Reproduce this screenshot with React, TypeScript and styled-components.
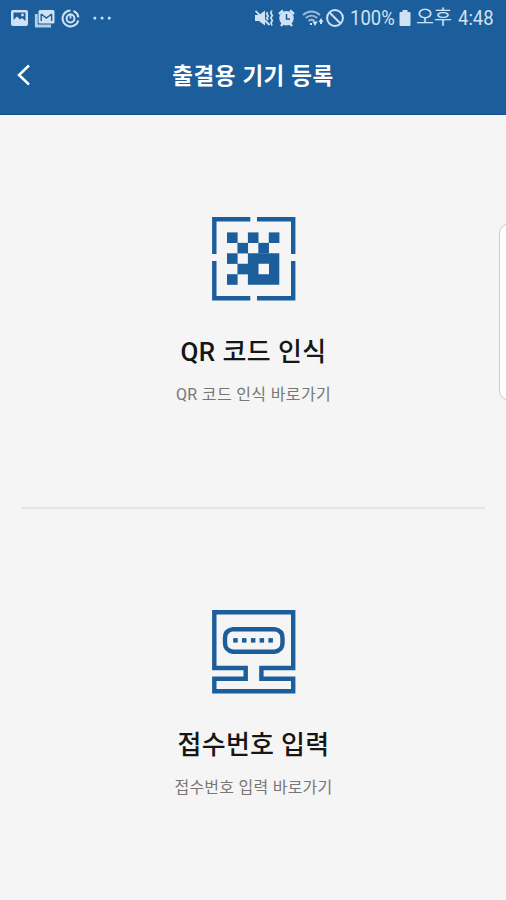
import React from "react";
import styled, { createGlobalStyle } from "styled-components";

const GlobalStyle = createGlobalStyle`
  *, *::before, *::after { box-sizing: border-box; }
  html, body { margin: 0; padding: 0; background: #f5f5f5; }
  body { font-family: Roboto, "Noto Sans CJK KR", sans-serif; overflow: hidden; }
`;

const brand = "#1b5e9b";
const statusTint = "#cfe2f4";

const Screen = styled.div`
  position: relative;
  display: flex;
  flex-direction: column;
  width: 506px;
  height: 900px;
  background: #f5f5f5;
  overflow: hidden;
`;

const Header = styled.header`
  flex: none;
  height: 115px;
  background: ${brand};
  border-bottom: 1px solid #175088;
`;

const StatusBar = styled.div`
  display: flex;
  justify-content: space-between;
  height: 36px;
  padding: 0 10px;
  color: ${statusTint};
`;

const StatusGroup = styled.div`
  display: flex;
  align-items: center;
`;

const StatusIcon = styled.svg<{ $gap?: number }>`
  display: block;
  flex: none;
  margin-right: ${({ $gap = 0 }) => $gap}px;
`;

const StatusText = styled.span<{ $width: number; $gap?: number }>`
  display: block;
  width: ${({ $width }) => $width}px;
  margin-right: ${({ $gap = 0 }) => $gap}px;
  font-size: 19.5px;
  line-height: 38px;
  white-space: nowrap;
`;

const Condensed = styled.span`
  display: inline-block;
  font-size: 21px;
  transform: scaleX(0.88);
  transform-origin: left center;
`;

const TitleBar = styled.div`
  display: grid;
  grid-template-columns: 60px 1fr 60px;
  align-items: center;
  height: 78px;
`;

const BackButton = styled.button`
  display: flex;
  align-items: center;
  height: 48px;
  padding: 0 0 0 16px;
  border: 0;
  background: none;
  color: #fff;
`;

const Title = styled.h1`
  margin: 2px 0 0;
  color: #fff;
  font-size: 22.5px;
  font-weight: 700;
  line-height: 32px;
  letter-spacing: 0.45px;
  word-spacing: 0.6px;
  text-align: center;
  white-space: nowrap;
`;

const Options = styled.main`
  display: flex;
  flex-direction: column;
`;

const Option = styled.section`
  display: flex;
  flex-direction: column;
  align-items: center;
  height: 393px;
  padding: 102px 0 0 1px;
  color: ${brand};
`;

const OptionIcon = styled.svg`
  display: block;
  width: 84px;
  height: 84px;
`;

const OptionTitle = styled.h2<{ $spacing: number }>`
  margin: 32px 0 0;
  color: #161616;
  font-size: 26px;
  font-weight: 500;
  line-height: 38px;
  letter-spacing: ${({ $spacing }) => $spacing}px;
  white-space: nowrap;
`;

const OptionHint = styled.p<{ $spacing: number }>`
  margin: 12px 0 0;
  color: #777;
  font-size: 16px;
  font-weight: 400;
  line-height: 24px;
  letter-spacing: ${({ $spacing }) => $spacing}px;
  white-space: nowrap;
`;

const Divider = styled.hr`
  width: 464px;
  height: 2px;
  margin: -1px auto;
  border: 0;
  background: #e6e6e6;
`;

const EdgeHandle = styled.div`
  position: absolute;
  top: 224px;
  right: -12px;
  width: 19px;
  height: 176px;
  border: 1px solid #c9c9c9;
  border-radius: 9px;
  background: #fff;
`;

const qrCells = [
  [0, 0], [2, 0], [4, 0],
  [1, 1], [3, 1],
  [0, 2],
  [1, 3],
  [0, 4],
];

function QrIcon() {
  return (
    <OptionIcon viewBox="0 0 84 84">
      <path
        d="M38.3 2.3H2.3V37M2.3 44V81.3H38.3M45 81.3H81.2V44M81.2 37V2.3H45"
        fill="none"
        stroke="currentColor"
        strokeWidth="4.4"
      />
      {qrCells.map(([x, y]) => (
        <rect key={`${x}-${y}`} x={15 + x * 10.45} y={15.4 + y * 10.45} width="10.6" height="10.6" fill="currentColor" />
      ))}
      <path d="M35.9 36.3H67.3V67.7H35.9ZM46.5 46.8V57.2H57V46.8Z" fill="currentColor" fillRule="evenodd" />
    </OptionIcon>
  );
}

function NumberEntryIcon() {
  return (
    <OptionIcon viewBox="0 0 84 84">
      <g fill="none" stroke="currentColor" strokeWidth="4.4">
        <path d="M2.3 2.3H81.2V58H49.4V68.7H81.2V81.3H2.3V68.7H33.7V58H2.3Z" />
        <path d="M21 19.2H62.5Q70.5 20.5 70.5 28V33Q70.5 40.5 62.5 41.7H21Q13 40.5 13 33V28Q13 20.5 21 19.2Z" />
      </g>
      {[21.2, 30, 38.9, 47.6, 56.4].map((x) => (
        <rect key={x} x={x} y="28.1" width="4.5" height="4.5" fill="currentColor" />
      ))}
    </OptionIcon>
  );
}

function NotificationIcons() {
  return (
    <StatusGroup>
      <StatusIcon $gap={5} width="19" height="18" viewBox="0 0 19 18">
        <path fill="currentColor" fillRule="evenodd" d="M3 1H16Q18 1 18 3V15Q18 17 16 17H3Q1 17 1 15V3Q1 1 3 1ZM3.5 3.5V11L7 7.5L10 10.5L12 9L15.5 12V3.5Z" />
        <circle cx="12.5" cy="6" r="1.4" fill="currentColor" />
      </StatusIcon>
      <StatusIcon $gap={6} width="21" height="19" viewBox="0 0 21 19">
        <path d="M2.3 5V17H17" fill="none" stroke="currentColor" strokeWidth="2.8" opacity=".85" />
        <rect x="4.5" y="1" width="16" height="13.5" rx="1.5" fill="currentColor" />
        <path d="M7.2 5L12.4 9L17.6 5M7.2 5V12M17.6 5V12" fill="none" stroke={brand} strokeWidth="1.4" />
      </StatusIcon>
      <StatusIcon $gap={13} width="19" height="19" viewBox="0 0 19 19">
        <path d="M9.5 1.5A8 8 0 1 0 17.3 11.5M17.4 8.3A8 8 0 0 0 12.5 2" fill="none" stroke="currentColor" strokeWidth="2.1" />
        <circle cx="9.5" cy="9.5" r="3.9" fill="none" stroke="currentColor" strokeWidth="2" />
        <path d="M9.5 4.5V9.5" stroke="currentColor" strokeWidth="1.8" />
      </StatusIcon>
      <StatusIcon width="20" height="4" viewBox="0 0 20 4" fill="currentColor">
        <rect x="0.5" y="0.8" width="2.7" height="2.7" rx=".8" />
        <rect x="7.7" y="0.8" width="2.7" height="2.7" rx=".8" />
        <rect x="14.9" y="0.8" width="2.7" height="2.7" rx=".8" />
      </StatusIcon>
    </StatusGroup>
  );
}

function SystemIcons() {
  return (
    <StatusGroup>
      <StatusIcon $gap={4} width="20" height="18" viewBox="0 0 20 18">
        <path d="M1 6H5L11 1.5V16.5L5 12H1Z" fill="currentColor" />
        <path d="M1.5 1.8L15.5 16" stroke="currentColor" strokeWidth="1.8" />
        <path d="M13.5 3L12.7 5L14.2 7L12.7 9L14.2 11M17.8 1.5L16.8 4L18.3 6.5L16.8 9L18.3 11.5L17 14L18 16.5" fill="none" stroke="currentColor" strokeWidth="1.7" />
      </StatusIcon>
      <StatusIcon $gap={7} width="17" height="18" viewBox="0 0 17 18">
        <path d="M1 5L5 1.3M12 1.3L16 5M3 17L5 14.5M14 17L12 14.5" stroke="currentColor" strokeWidth="2.4" />
        <circle cx="8.5" cy="9.3" r="7.2" fill="currentColor" />
        <path d="M8.5 5V10H12" fill="none" stroke={brand} strokeWidth="1.5" />
      </StatusIcon>
      <StatusIcon width="23" height="18" viewBox="0 0 23 18">
        <path d="M1 6Q9.5-1 18 6M3.7 9Q9.5 4.2 15.3 9M6.5 12Q9.5 9.5 12.5 12" fill="none" stroke="currentColor" strokeWidth="1.8" opacity=".72" />
        <path d="M10.5 12.5L13 17L15.5 12.5ZM16.6 13L19 9L21.4 13ZM18 12H20V15H18ZM8 14H10V16H8Z" fill="currentColor" />
      </StatusIcon>
      <StatusIcon $gap={5} width="20" height="20" viewBox="0 0 20 20">
        <circle cx="10" cy="10" r="7.9" fill="none" stroke="currentColor" strokeWidth="2" />
        <path d="M4.5 4.5L15.5 15.5" stroke="currentColor" strokeWidth="2" />
      </StatusIcon>
      <StatusText $width={44} $gap={5}><Condensed>100%</Condensed></StatusText>
      <StatusIcon $gap={5} width="12" height="18" viewBox="0 0 12 18">
        <path d="M3.5 1H8.5V3H10.5Q11.5 3 11.5 4V16Q11.5 17 10.5 17H1.5Q.5 17 .5 16V4Q.5 3 1.5 3H3.5Z" fill="currentColor" />
      </StatusIcon>
      <StatusText $width={42}>오후</StatusText>
      <StatusText $width={38}><Condensed>4:48</Condensed></StatusText>
    </StatusGroup>
  );
}

export default function App() {
  return (
    <>
      <GlobalStyle />
      <Screen>
        <Header>
          <StatusBar>
            <NotificationIcons />
            <SystemIcons />
          </StatusBar>
          <TitleBar>
            <BackButton aria-label="뒤로">
              <svg width="15" height="22" viewBox="0 0 15 22">
                <path d="M13 1.5L3 11L13 20.5" fill="none" stroke="currentColor" strokeWidth="2.5" />
              </svg>
            </BackButton>
            <Title>출결용 기기 등록</Title>
          </TitleBar>
        </Header>
        <Options>
          <Option>
            <QrIcon />
            <OptionTitle $spacing={0.4}>QR 코드 인식</OptionTitle>
            <OptionHint $spacing={0.35}>QR 코드 인식 바로가기</OptionHint>
          </Option>
          <Divider />
          <Option>
            <NumberEntryIcon />
            <OptionTitle $spacing={0.3}>접수번호 입력</OptionTitle>
            <OptionHint $spacing={0.25}>접수번호 입력 바로가기</OptionHint>
          </Option>
        </Options>
        <EdgeHandle />
      </Screen>
    </>
  );
}
